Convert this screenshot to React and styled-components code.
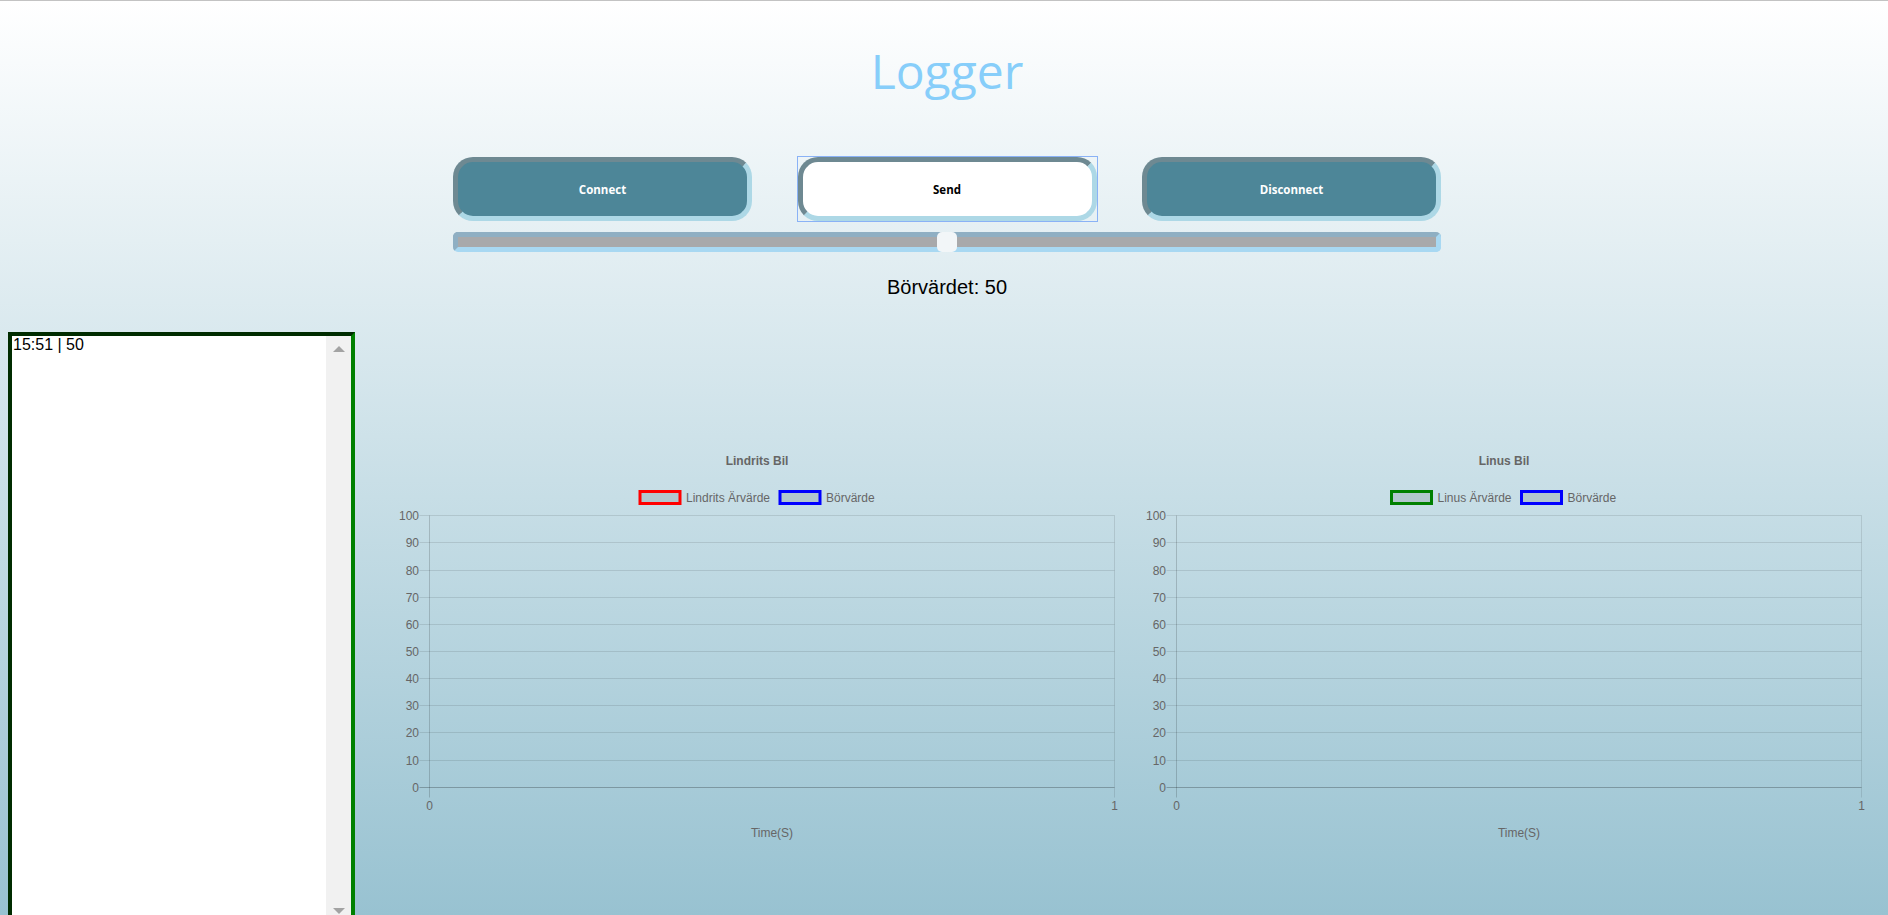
import styled, { createGlobalStyle } from "styled-components";

const GlobalStyle = createGlobalStyle`
  html, body {
    margin: 0;
    height: 100%;
    overflow: hidden;
  }
  body {
    font-family: "Liberation Sans", Arial, sans-serif;
  }
`;

const Page = styled.div`
  box-sizing: border-box;
  height: 100vh;
  padding: 0 8px;
  border-top: 1px solid #c3c3c3;
  background: linear-gradient(#ffffff, #98c2d1);
  overflow: hidden;
`;

const Header = styled.header`
  display: flex;
  flex-direction: column;
  align-items: center;
  padding-left: 6px;
`;

const Title = styled.h1`
  margin: 37px 0 0;
  font-family: "Open Sans", "Noto Sans", sans-serif;
  font-weight: 400;
  font-size: 48px;
  line-height: 65px;
  color: #87cefa;
`;

const Controls = styled.div`
  width: 988px;
  margin-top: 54px;
`;

const ButtonRow = styled.div`
  display: flex;
  justify-content: space-between;
`;

const Button = styled.button`
  box-sizing: border-box;
  width: 299px;
  height: 64px;
  border: 5px inset lightblue;
  border-radius: 20px;
  background: ${(p) => (p.$light ? "#ffffff" : "#4d8698")};
  color: ${(p) => (p.$light ? "#000000" : "#ffffff")};
  font-family: "Open Sans", "Noto Sans", sans-serif;
  font-weight: 700;
  font-size: 11.5px;
  cursor: pointer;
`;

const FocusRing = styled.div`
  display: flex;
  margin: -1px;
  border: 1px solid #8ab2f6;
`;

const Slider = styled.input`
  -webkit-appearance: none;
  appearance: none;
  box-sizing: border-box;
  display: block;
  width: 100%;
  height: 20px;
  margin: 11px 0 0;
  border: 5px solid;
  border-color: #8fafc3 #a8d8f2 #a8d8f2 #8fafc3;
  border-radius: 5px;
  background: #a8a9ab;
  outline: none;

  &::-webkit-slider-thumb {
    -webkit-appearance: none;
    appearance: none;
    width: 20px;
    height: 20px;
    border-radius: 5px;
    background: #f2f6f8;
    cursor: pointer;
  }
`;

const Setpoint = styled.p`
  margin: 24px 0 0;
  font-size: 20px;
  line-height: 23px;
  color: #000;
  text-align: center;
`;

const Main = styled.main`
  display: flex;
  align-items: flex-start;
  margin-top: 33px;
`;

const LogPanel = styled.div`
  flex-shrink: 0;
  box-sizing: border-box;
  display: flex;
  width: 347px;
  height: 596px;
  border: 4px inset green;
  background: #fff;
`;

const LogText = styled.textarea`
  flex: 1;
  min-width: 0;
  margin: 0;
  padding: 0 1px;
  border: none;
  background: transparent;
  font-family: "Liberation Sans", Arial, sans-serif;
  font-size: 16px;
  line-height: 18px;
  color: #000;
  resize: none;
  outline: none;
  overflow: hidden;
`;

const ScrollTrack = styled.div`
  display: flex;
  flex-direction: column;
  justify-content: space-between;
  align-items: center;
  width: 25px;
  padding: 10px 0;
  box-sizing: border-box;
  background: #f1f1f1;
`;

const ScrollArrow = styled.span`
  width: 0;
  height: 0;
  border-left: 6px solid transparent;
  border-right: 6px solid transparent;
  ${(p) =>
    p.$down ? "border-top: 6px solid #a3a3a3;" : "border-bottom: 6px solid #a3a3a3;"}
`;

const Charts = styled.section`
  display: flex;
  gap: 13px;
  margin-left: 35px;
`;

const ChartBox = styled.div`
  width: 734px;
  height: 410px;
  margin-top: 108px;
`;

const ChartText = styled.text`
  font-family: "Liberation Sans", Arial, sans-serif;
  font-size: 12px;
  font-weight: ${(p) => (p.$bold ? 700 : 400)};
  fill: #666;
`;

const LEFT = 39.5;
const RIGHT = 724.5;
const TICKS = [100, 90, 80, 70, 60, 50, 40, 30, 20, 10, 0];
const rowY = (i) => Math.round(75.7 + i * 27.16 - 0.5) + 0.5;

function LineChart({ title, legend }) {
  const bottom = rowY(TICKS.length - 1);
  return (
    <ChartBox>
      <svg width="734" height="410" viewBox="0 0 734 410">
        <ChartText x="367" y="25" textAnchor="middle" $bold>
          {title}
        </ChartText>

        {legend.map((item) => (
          <g key={item.label}>
            <rect
              x={item.x}
              y="51.5"
              width="40"
              height="12"
              fill="rgba(0,0,0,0.1)"
              stroke={item.color}
              strokeWidth="3"
            />
            <ChartText x={item.x + 46} y="61.5">
              {item.label}
            </ChartText>
          </g>
        ))}

        {TICKS.map((t, i) => (
          <g key={t}>
            <line
              x1="29.5"
              x2={RIGHT}
              y1={rowY(i)}
              y2={rowY(i)}
              stroke={t === 0 ? "rgba(0,0,0,0.25)" : "rgba(0,0,0,0.1)"}
            />
            <ChartText x="29" y={rowY(i) + 4} textAnchor="end">
              {t}
            </ChartText>
          </g>
        ))}

        <line x1={LEFT} x2={LEFT} y1={rowY(0)} y2={bottom + 10} stroke="rgba(0,0,0,0.17)" />
        <line x1={RIGHT} x2={RIGHT} y1={rowY(0)} y2={bottom + 10} stroke="rgba(0,0,0,0.1)" />

        <ChartText x={LEFT} y="370" textAnchor="middle">
          0
        </ChartText>
        <ChartText x={RIGHT} y="370" textAnchor="middle">
          1
        </ChartText>
        <ChartText x="382" y="397" textAnchor="middle">
          Time(S)
        </ChartText>
      </svg>
    </ChartBox>
  );
}

const lindritsLegend = [
  { label: "Lindrits Ärvärde", color: "#ff0000", x: 250 },
  { label: "Börvärde", color: "#0000ff", x: 390 },
];

const linusLegend = [
  { label: "Linus Ärvärde", color: "#008000", x: 254.5 },
  { label: "Börvärde", color: "#0000ff", x: 384.5 },
];

export default function App() {
  return (
    <Page>
      <GlobalStyle />
      <Header>
        <Title>Logger</Title>
        <Controls>
          <ButtonRow>
            <Button>Connect</Button>
            <FocusRing>
              <Button $light>Send</Button>
            </FocusRing>
            <Button>Disconnect</Button>
          </ButtonRow>
          <Slider type="range" min="0" max="100" defaultValue="50" />
          <Setpoint>Börvärdet: 50</Setpoint>
        </Controls>
      </Header>
      <Main>
        <LogPanel>
          <LogText readOnly defaultValue="15:51 | 50" />
          <ScrollTrack>
            <ScrollArrow />
            <ScrollArrow $down />
          </ScrollTrack>
        </LogPanel>
        <Charts>
          <LineChart title="Lindrits Bil" legend={lindritsLegend} />
          <LineChart title="Linus Bil" legend={linusLegend} />
        </Charts>
      </Main>
    </Page>
  );
}
